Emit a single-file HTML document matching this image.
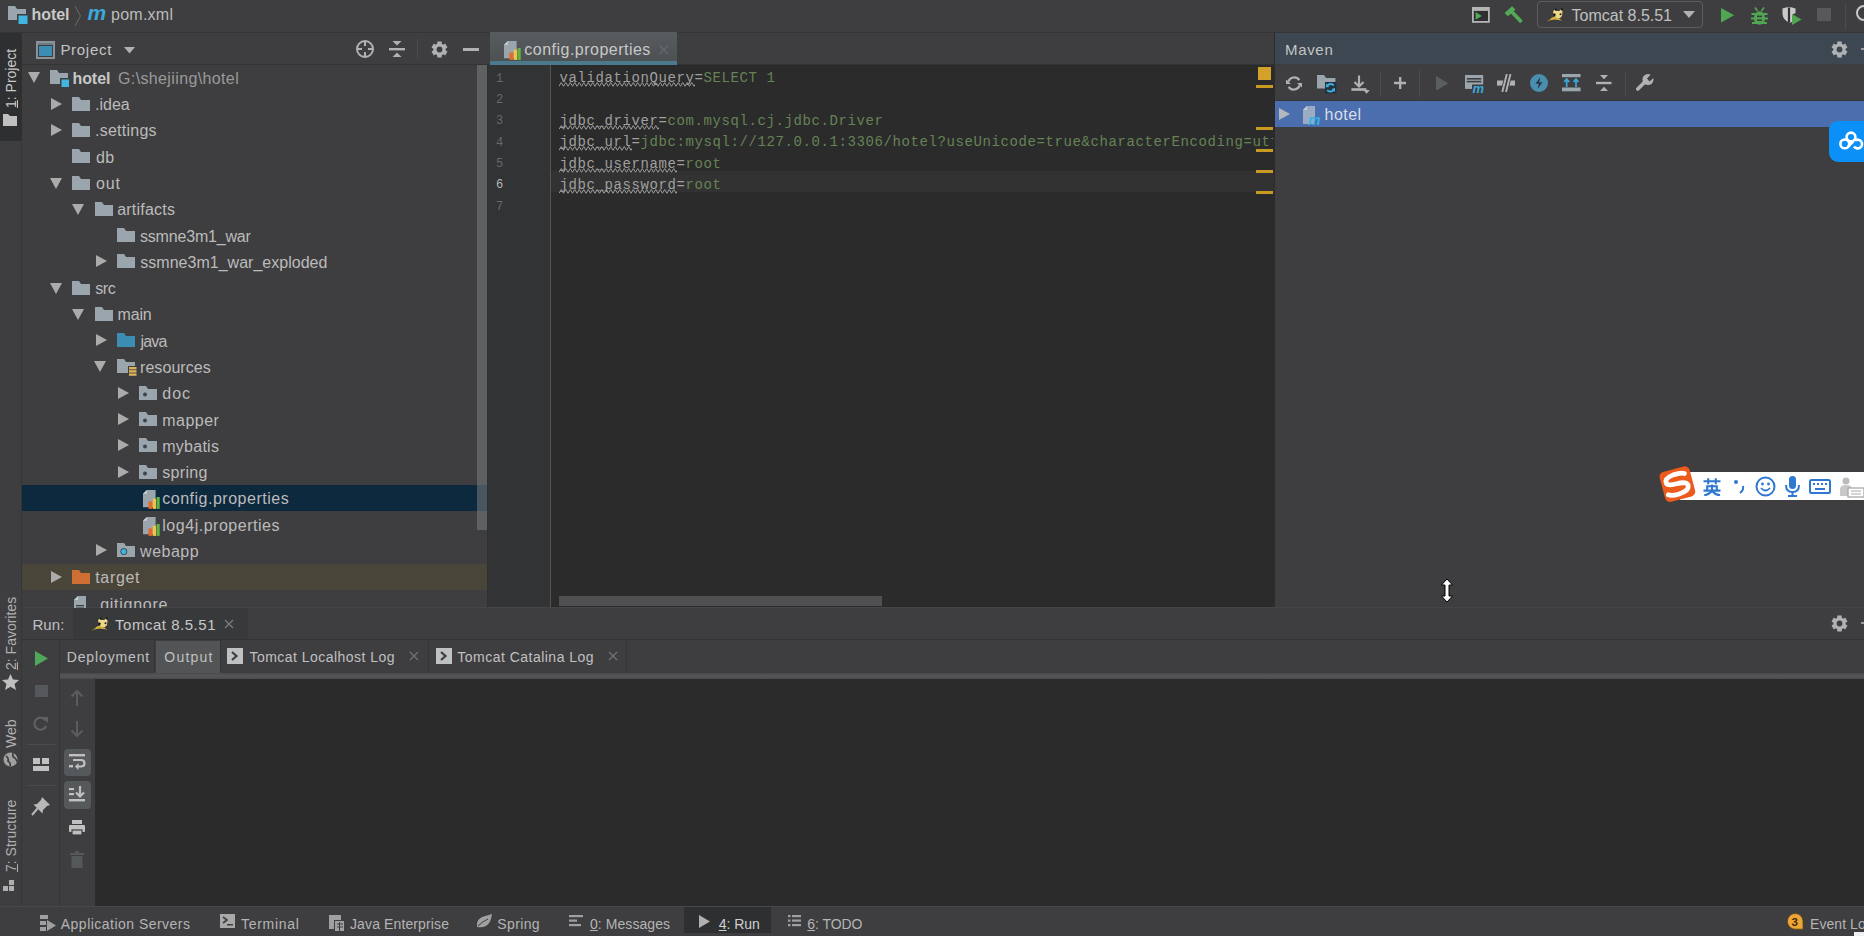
<!DOCTYPE html>
<html><head><meta charset="utf-8">
<style>
*{box-sizing:border-box;margin:0;padding:0}
html,body{width:1864px;height:936px;overflow:hidden;background:#3E3E40;font-family:"Liberation Sans",sans-serif;color:#BBBBBB;font-size:16px}
.a{position:absolute;display:block}
.t{position:absolute;white-space:nowrap;line-height:20px}
.mono{font-family:"Liberation Mono",monospace}
u{text-decoration:underline;text-underline-offset:1px}
</style></head><body>
<div class="a" style="left:0px;top:0px;width:1864px;height:33px;background:#3E3E40;"></div>
<div class="a" style="left:0px;top:32px;width:1864px;height:1px;background:#333537;"></div>
<div class="a" style="left:0px;top:33px;width:22px;height:873px;background:#3E3E40;"></div>
<div class="a" style="left:21px;top:33px;width:1px;height:873px;background:#333537;"></div>
<div class="a" style="left:0px;top:33px;width:22px;height:108px;background:#2D2F31;"></div>
<div class="a" style="left:22px;top:33px;width:466px;height:31px;background:#3E3E40;"></div>
<div class="a" style="left:22px;top:64px;width:466px;height:1px;background:#323436;"></div>
<div class="a" style="left:22px;top:65px;width:466px;height:542px;background:#3E3E40;"></div>
<div class="a" style="left:488px;top:33px;width:786px;height:31px;background:#3E3E40;"></div>
<div class="a" style="left:488px;top:64px;width:786px;height:1px;background:#323436;"></div>
<div class="a" style="left:488px;top:65px;width:786px;height:542px;background:#2B2B2B;"></div>
<div class="a" style="left:488px;top:65px;width:62px;height:542px;background:#313335;"></div>
<div class="a" style="left:550px;top:65px;width:1px;height:542px;background:#555555;"></div>
<div class="a" style="left:1274px;top:33px;width:590px;height:31px;background:#3D4752;"></div>
<div class="a" style="left:1274px;top:33px;width:1px;height:574px;background:#2B2B2B;"></div>
<div class="a" style="left:1275px;top:64px;width:589px;height:37px;background:#3E3E40;"></div>
<div class="a" style="left:1275px;top:100px;width:589px;height:1px;background:#333537;"></div>
<div class="a" style="left:1275px;top:101px;width:589px;height:26px;background:#4B6EAF;"></div>
<div class="a" style="left:22px;top:607px;width:1842px;height:1.5px;background:#444547;"></div>
<div class="a" style="left:22px;top:608px;width:1842px;height:32px;background:#3E3E40;"></div>
<div class="a" style="left:22px;top:639px;width:1842px;height:1px;background:#323436;"></div>
<div class="a" style="left:22px;top:640px;width:1842px;height:33px;background:#3E3E40;"></div>
<div class="a" style="left:95px;top:679px;width:1769px;height:227px;background:#2B2B2B;"></div>
<div class="a" style="left:0px;top:906px;width:1864px;height:30px;background:#3E3E40;"></div>
<div class="a" style="left:0px;top:906px;width:1864px;height:1px;background:#47484A;"></div>
<div class="a" style="left:22px;top:484.88px;width:465px;height:26.28px;background:#0D293E;"></div>
<div class="a" style="left:22px;top:563.72px;width:465px;height:26.28px;background:#4A4539;"></div>
<svg class="a" style="left:27.5px;top:72.4px;" width="12" height="11" viewBox="0 0 12 11"><path d="M0 0H12L6 11Z" fill="#ABABAB"/></svg>
<svg class="a" style="left:50.0px;top:70.4px;" width="20" height="18" viewBox="0 0 20 18"><path d="M0 0H7L9 3H18V14H0Z" fill="#9AA5AD"/><rect x="10" y="8" width="9" height="9" fill="#3E3E40"/><rect x="11.5" y="9.5" width="7.5" height="7.5" fill="#40B6E0"/></svg>
<svg class="a" style="left:51.3px;top:97.68px;" width="11" height="12" viewBox="0 0 11 12"><path d="M0 0L11 6L0 12Z" fill="#ABABAB"/></svg>
<svg class="a" style="left:72.3px;top:96.68px;" width="20" height="18" viewBox="0 0 20 18"><path d="M0 0H7L9 3H18V14H0Z" fill="#9AA5AD"/></svg>
<svg class="a" style="left:51.3px;top:123.96000000000001px;" width="11" height="12" viewBox="0 0 11 12"><path d="M0 0L11 6L0 12Z" fill="#ABABAB"/></svg>
<svg class="a" style="left:72.3px;top:122.96000000000001px;" width="20" height="18" viewBox="0 0 20 18"><path d="M0 0H7L9 3H18V14H0Z" fill="#9AA5AD"/></svg>
<svg class="a" style="left:72.3px;top:149.24px;" width="20" height="18" viewBox="0 0 20 18"><path d="M0 0H7L9 3H18V14H0Z" fill="#9AA5AD"/></svg>
<svg class="a" style="left:49.8px;top:177.52px;" width="12" height="11" viewBox="0 0 12 11"><path d="M0 0H12L6 11Z" fill="#ABABAB"/></svg>
<svg class="a" style="left:72.3px;top:175.52px;" width="20" height="18" viewBox="0 0 20 18"><path d="M0 0H7L9 3H18V14H0Z" fill="#9AA5AD"/></svg>
<svg class="a" style="left:72.1px;top:203.8px;" width="12" height="11" viewBox="0 0 12 11"><path d="M0 0H12L6 11Z" fill="#ABABAB"/></svg>
<svg class="a" style="left:94.6px;top:201.8px;" width="20" height="18" viewBox="0 0 20 18"><path d="M0 0H7L9 3H18V14H0Z" fill="#9AA5AD"/></svg>
<svg class="a" style="left:116.9px;top:228.08px;" width="20" height="18" viewBox="0 0 20 18"><path d="M0 0H7L9 3H18V14H0Z" fill="#9AA5AD"/></svg>
<svg class="a" style="left:95.9px;top:255.36px;" width="11" height="12" viewBox="0 0 11 12"><path d="M0 0L11 6L0 12Z" fill="#ABABAB"/></svg>
<svg class="a" style="left:116.9px;top:254.36px;" width="20" height="18" viewBox="0 0 20 18"><path d="M0 0H7L9 3H18V14H0Z" fill="#9AA5AD"/></svg>
<svg class="a" style="left:49.8px;top:282.64px;" width="12" height="11" viewBox="0 0 12 11"><path d="M0 0H12L6 11Z" fill="#ABABAB"/></svg>
<svg class="a" style="left:72.3px;top:280.64px;" width="20" height="18" viewBox="0 0 20 18"><path d="M0 0H7L9 3H18V14H0Z" fill="#9AA5AD"/></svg>
<svg class="a" style="left:72.1px;top:308.92px;" width="12" height="11" viewBox="0 0 12 11"><path d="M0 0H12L6 11Z" fill="#ABABAB"/></svg>
<svg class="a" style="left:94.6px;top:306.92px;" width="20" height="18" viewBox="0 0 20 18"><path d="M0 0H7L9 3H18V14H0Z" fill="#9AA5AD"/></svg>
<svg class="a" style="left:95.9px;top:334.20000000000005px;" width="11" height="12" viewBox="0 0 11 12"><path d="M0 0L11 6L0 12Z" fill="#ABABAB"/></svg>
<svg class="a" style="left:116.9px;top:333.20000000000005px;" width="20" height="18" viewBox="0 0 20 18"><path d="M0 0H7L9 3H18V14H0Z" fill="#3C8DB3"/></svg>
<svg class="a" style="left:94.4px;top:361.48px;" width="12" height="11" viewBox="0 0 12 11"><path d="M0 0H12L6 11Z" fill="#ABABAB"/></svg>
<svg class="a" style="left:116.9px;top:359.48px;" width="20" height="18" viewBox="0 0 20 18"><path d="M0 0H7L9 3H18V14H0Z" fill="#9AA5AD"/><rect x="11" y="7" width="9" height="11" fill="#3E3E40"/><rect x="12" y="8" width="7.5" height="2.4" fill="#D9B45A"/><rect x="12" y="11.2" width="7.5" height="2.4" fill="#D9B45A"/><rect x="12" y="14.4" width="7.5" height="2.4" fill="#D9B45A"/></svg>
<svg class="a" style="left:118.2px;top:386.76px;" width="11" height="12" viewBox="0 0 11 12"><path d="M0 0L11 6L0 12Z" fill="#ABABAB"/></svg>
<svg class="a" style="left:139.2px;top:385.76px;" width="20" height="18" viewBox="0 0 20 18"><path d="M0 0H7L9 3H18V14H0Z" fill="#9AA5AD"/><circle cx="6" cy="8.5" r="2" fill="#3A4550"/></svg>
<svg class="a" style="left:118.2px;top:413.03999999999996px;" width="11" height="12" viewBox="0 0 11 12"><path d="M0 0L11 6L0 12Z" fill="#ABABAB"/></svg>
<svg class="a" style="left:139.2px;top:412.03999999999996px;" width="20" height="18" viewBox="0 0 20 18"><path d="M0 0H7L9 3H18V14H0Z" fill="#9AA5AD"/><circle cx="6" cy="8.5" r="2" fill="#3A4550"/></svg>
<svg class="a" style="left:118.2px;top:439.32000000000005px;" width="11" height="12" viewBox="0 0 11 12"><path d="M0 0L11 6L0 12Z" fill="#ABABAB"/></svg>
<svg class="a" style="left:139.2px;top:438.32000000000005px;" width="20" height="18" viewBox="0 0 20 18"><path d="M0 0H7L9 3H18V14H0Z" fill="#9AA5AD"/><circle cx="6" cy="8.5" r="2" fill="#3A4550"/></svg>
<svg class="a" style="left:118.2px;top:465.6px;" width="11" height="12" viewBox="0 0 11 12"><path d="M0 0L11 6L0 12Z" fill="#ABABAB"/></svg>
<svg class="a" style="left:139.2px;top:464.6px;" width="20" height="18" viewBox="0 0 20 18"><path d="M0 0H7L9 3H18V14H0Z" fill="#9AA5AD"/><circle cx="6" cy="8.5" r="2" fill="#3A4550"/></svg>
<svg class="a" style="left:142.79999999999998px;top:490.28px;" width="18" height="20" viewBox="0 0 18 20"><path d="M3.8 0H12.6V17.3H0V3.8Z" fill="#9AA5AD"/><path d="M0 3.8L3.8 0V3.8Z" fill="#C9D1D6"/><rect x="4.6" y="10.8" width="9" height="8.6" fill="#3E3E40" opacity=".0"/><rect x="5.5" y="11.5" width="3.9" height="7.4" fill="#E0692B"/><rect x="9.8" y="8.7" width="3.4" height="10.2" fill="#F0C24E"/><rect x="13.6" y="7" width="3.1" height="11.9" fill="#62B543"/></svg>
<svg class="a" style="left:142.79999999999998px;top:516.56px;" width="18" height="20" viewBox="0 0 18 20"><path d="M3.8 0H12.6V17.3H0V3.8Z" fill="#9AA5AD"/><path d="M0 3.8L3.8 0V3.8Z" fill="#C9D1D6"/><rect x="4.6" y="10.8" width="9" height="8.6" fill="#3E3E40" opacity=".0"/><rect x="5.5" y="11.5" width="3.9" height="7.4" fill="#E0692B"/><rect x="9.8" y="8.7" width="3.4" height="10.2" fill="#F0C24E"/><rect x="13.6" y="7" width="3.1" height="11.9" fill="#62B543"/></svg>
<svg class="a" style="left:95.9px;top:544.44px;" width="11" height="12" viewBox="0 0 11 12"><path d="M0 0L11 6L0 12Z" fill="#ABABAB"/></svg>
<svg class="a" style="left:116.9px;top:543.44px;" width="20" height="18" viewBox="0 0 20 18"><path d="M0 0H7L9 3H18V14H0Z" fill="#9AA5AD"/><circle cx="6.8" cy="8.6" r="3.4" fill="#2F3A45"/><circle cx="6.8" cy="8.6" r="2.6" fill="#40B6E0"/></svg>
<svg class="a" style="left:51.3px;top:570.72px;" width="11" height="12" viewBox="0 0 11 12"><path d="M0 0L11 6L0 12Z" fill="#ABABAB"/></svg>
<svg class="a" style="left:72.3px;top:569.72px;" width="20" height="18" viewBox="0 0 20 18"><path d="M0 0H7L9 3H18V14H0Z" fill="#CF6E32"/></svg>
<svg class="a" style="left:74.3px;top:596.0px;" width="14" height="16" viewBox="0 0 14 16"><path d="M4 0H12V14H0V4Z" fill="#9AA5AD"/><path d="M0 4H4V0Z" fill="#C5CDD2"/><rect x="2" y="9" width="8" height="1.3" fill="#3E3E40"/><rect x="2" y="11.5" width="8" height="1.3" fill="#3E3E40"/></svg>
<div class="t" style="left:72.40px;top:68.91px;font-size:16px;color:#C8C8C8;line-height:20px;letter-spacing:-0.038px;font-weight:bold;">hotel</div>
<div class="t" style="left:118.00px;top:68.91px;font-size:16px;color:#9A9A9A;line-height:20px;letter-spacing:0.372px;">G:\shejiing\hotel</div>
<div class="t" style="left:95.00px;top:95.19px;font-size:16px;color:#BBBBBB;line-height:20px;letter-spacing:0.013px;">.idea</div>
<div class="t" style="left:95.00px;top:121.47px;font-size:16px;color:#BBBBBB;line-height:20px;letter-spacing:0.247px;">.settings</div>
<div class="t" style="left:95.90px;top:147.75px;font-size:16px;color:#BBBBBB;line-height:20px;letter-spacing:0.550px;">db</div>
<div class="t" style="left:95.90px;top:174.03px;font-size:16px;color:#BBBBBB;line-height:20px;letter-spacing:0.925px;">out</div>
<div class="t" style="left:117.20px;top:200.31px;font-size:16px;color:#BBBBBB;line-height:20px;letter-spacing:0.213px;">artifacts</div>
<div class="t" style="left:140.00px;top:226.59px;font-size:16px;color:#BBBBBB;line-height:20px;letter-spacing:-0.189px;">ssmne3m1_war</div>
<div class="t" style="left:140.30px;top:252.87px;font-size:16px;color:#BBBBBB;line-height:20px;letter-spacing:0.017px;">ssmne3m1_war_exploded</div>
<div class="t" style="left:95.20px;top:279.15px;font-size:16px;color:#BBBBBB;line-height:20px;letter-spacing:-0.337px;">src</div>
<div class="t" style="left:117.50px;top:305.43px;font-size:16px;color:#BBBBBB;line-height:20px;letter-spacing:-0.175px;">main</div>
<div class="t" style="left:140.50px;top:331.71px;font-size:16px;color:#BBBBBB;line-height:20px;letter-spacing:-0.800px;">java</div>
<div class="t" style="left:140.00px;top:357.99px;font-size:16px;color:#BBBBBB;line-height:20px;letter-spacing:0.069px;">resources</div>
<div class="t" style="left:162.30px;top:384.27px;font-size:16px;color:#BBBBBB;line-height:20px;letter-spacing:0.975px;">doc</div>
<div class="t" style="left:162.30px;top:410.55px;font-size:16px;color:#BBBBBB;line-height:20px;letter-spacing:0.470px;">mapper</div>
<div class="t" style="left:162.30px;top:436.83px;font-size:16px;color:#BBBBBB;line-height:20px;letter-spacing:0.246px;">mybatis</div>
<div class="t" style="left:162.30px;top:463.11px;font-size:16px;color:#BBBBBB;line-height:20px;letter-spacing:0.295px;">spring</div>
<div class="t" style="left:162.30px;top:489.39px;font-size:16px;color:#BBBBBB;line-height:20px;letter-spacing:0.503px;">config.properties</div>
<div class="t" style="left:162.30px;top:515.67px;font-size:16px;color:#BBBBBB;line-height:20px;letter-spacing:0.522px;">log4j.properties</div>
<div class="t" style="left:140.12px;top:541.95px;font-size:16px;color:#BBBBBB;line-height:20px;letter-spacing:0.475px;">webapp</div>
<div class="t" style="left:95.20px;top:568.23px;font-size:16px;color:#BBBBBB;line-height:20px;letter-spacing:0.685px;">target</div>
<div class="t" style="left:95.00px;top:594.51px;font-size:16px;color:#BBBBBB;line-height:20px;letter-spacing:0.736px;">.gitignore</div>
<svg class="a" style="left:8px;top:6px;" width="20" height="18" viewBox="0 0 20 18"><path d="M0 0H7L9 3H18V14H0Z" fill="#9AA5AD"/><rect x="9" y="8" width="11" height="10" fill="#3E3E40"/><rect x="10.5" y="9.5" width="9" height="8.5" fill="#40B6E0"/></svg>
<div class="t" style="left:31.60px;top:5.06px;font-size:16px;color:#C8C8C8;line-height:20px;letter-spacing:-0.088px;font-weight:bold;">hotel</div>
<svg class="a" style="left:74px;top:5px;" width="8" height="22" viewBox="0 0 8 22"><path d="M1 1L6.5 11L1 21" fill="none" stroke="#6A6A6A" stroke-width="1"/></svg>
<div class="t" style="left:87.5px;top:3px;font-size:21px;color:#BBBBBB;line-height:20px;"><i style="font-size:21px;color:#3DA8D8;font-weight:bold;letter-spacing:-1px">m</i></div>
<div class="t" style="left:111.00px;top:5.06px;font-size:16px;color:#BBBBBB;line-height:20px;letter-spacing:0.250px;">pom.xml</div>
<svg class="a" style="left:1472px;top:7px;" width="18" height="16" viewBox="0 0 18 16"><rect x="0.9" y="0.9" width="16" height="14" fill="#2F2F31" stroke="#B5B5B5" stroke-width="1.8"/><rect x="0.9" y="0.9" width="16" height="3" fill="#B5B5B5"/><path d="M3.6 5L9.8 8.9L3.6 12.8Z" fill="#54A957"/></svg>
<svg class="a" style="left:1503px;top:5px;" width="21" height="19" viewBox="0 0 21 19"><path d="M1.5 8L9 1.3L12.5 4.6L5 11.2Z" fill="#54A957"/><path d="M7.5 5.5L18.5 17" stroke="#54A957" stroke-width="3.8"/></svg>
<div class="a" style="left:1537px;top:1px;width:166px;height:27px;background:transparent;border:1px solid #5A5D60;border-radius:4px"></div>
<svg class="a" style="left:1547px;top:8px;" width="17" height="14" viewBox="0 0 17 14"><path d="M0.5 13L5 9.5L8 8.5L10.5 10L15.5 12.5L11 12L7.5 11.5L3.5 12.2Z" fill="#D6B23A"/><path d="M6 3.5L8 1L9.5 3H12.5L14 0.8L15.5 3.5L15 8L12.5 10.5L9.5 10L7 7Z" fill="#EDD88A"/><circle cx="8.6" cy="1.6" r="1.1" fill="#111"/><circle cx="14.6" cy="1.3" r="1.1" fill="#111"/><circle cx="7.5" cy="6.8" r="1.2" fill="#111"/><circle cx="13.5" cy="6.2" r="1" fill="#222"/><path d="M0 13.5L4 10.5" stroke="#6A6A3A" stroke-width="1"/></svg>
<div class="t" style="left:1571.60px;top:6.26px;font-size:16px;color:#C0C0C0;line-height:20px;letter-spacing:-0.008px;">Tomcat 8.5.51</div>
<svg class="a" style="left:1683px;top:11px;" width="12" height="8" viewBox="0 0 12 8"><path d="M0 0H12L6 7Z" fill="#AFB1B3"/></svg>
<svg class="a" style="left:1720.5px;top:7.8px;" width="14" height="15" viewBox="0 0 14 15"><path d="M0 0L13.2 7.2L0 14.5Z" fill="#50A653"/></svg>
<svg class="a" style="left:1751px;top:6.5px;" width="17" height="18" viewBox="0 0 17 18"><path d="M4 0.5L6.5 4M13 0.5L10.5 4" stroke="#50A653" stroke-width="1.6"/><ellipse cx="8.5" cy="11" rx="5.6" ry="6.8" fill="#50A653"/><path d="M0.5 7H16.5M0 11.5H17M1 16H16" stroke="#50A653" stroke-width="2"/><rect x="6" y="8.6" width="5" height="1.6" fill="#3E3E40"/><rect x="6" y="12.4" width="5" height="1.6" fill="#3E3E40"/></svg>
<svg class="a" style="left:1781.5px;top:7px;" width="20" height="18" viewBox="0 0 20 18"><path d="M0.5 1.5Q4 0 7 0Q10 0 13.5 1.5V6Q11 6.5 10 9V15Q8.5 15.5 7 15.5Q1 13 0.5 7Z" fill="#C9C9C9"/><path d="M7 0.5V15.5" stroke="#2F3133" stroke-width="2.2"/><path d="M10 7L19.5 12.5L10 18Z" fill="#50A653"/></svg>
<div class="a" style="left:1817.4px;top:8.3px;width:13.3px;height:12.7px;background:#57595B;"></div>
<div class="a" style="left:1844.5px;top:3px;width:1px;height:27px;background:#4A4D4F;"></div>
<svg class="a" style="left:1855px;top:5px;" width="9" height="18" viewBox="0 0 9 18"><circle cx="9" cy="8" r="7" fill="none" stroke="#C8C8C8" stroke-width="2"/></svg>
<div class="t" style="left:4px;top:108px;font-size:14px;color:#C8C8C8;transform:rotate(-90deg);transform-origin:0 0;line-height:14px"><u>1</u>: Project</div>
<svg class="a" style="left:3px;top:114px;" width="15" height="13" viewBox="0 0 15 13"><path d="M0 0H5L7 2H14V12H0Z" fill="#C0C0C0"/></svg>
<div class="t" style="left:4px;top:670px;font-size:14px;color:#B0B0B0;transform:rotate(-90deg);transform-origin:0 0;line-height:14px"><u>2</u>: Favorites</div>
<svg class="a" style="left:2px;top:674px;" width="17" height="16" viewBox="0 0 17 16"><path d="M8.5 0L11 5.5L17 6L12.5 10L14 16L8.5 12.8L3 16L4.5 10L0 6L6 5.5Z" fill="#C0C0C0"/></svg>
<div class="t" style="left:4px;top:748px;font-size:14px;color:#B0B0B0;transform:rotate(-90deg);transform-origin:0 0;line-height:14px">Web</div>
<svg class="a" style="left:3px;top:752px;" width="15" height="15" viewBox="0 0 15 15"><circle cx="7.5" cy="7.5" r="7" fill="#A0A0A0"/><path d="M3 4Q6 6 5 9Q8 11 7 14M10 1Q9 5 12 6Q14 8 14 10" stroke="#3E3E40" stroke-width="1.6" fill="none"/></svg>
<div class="t" style="left:4px;top:872px;font-size:14px;color:#B0B0B0;transform:rotate(-90deg);transform-origin:0 0;line-height:14px"><u>7</u>: Structure</div>
<svg class="a" style="left:3px;top:877px;" width="14" height="14" viewBox="0 0 14 14"><rect x="0" y="9" width="5" height="5" fill="#B0B0B0"/><rect x="6" y="9" width="5" height="5" fill="#B0B0B0"/><rect x="6" y="3" width="5" height="5" fill="#B0B0B0"/></svg>
<svg class="a" style="left:36px;top:41px;" width="19" height="18" viewBox="0 0 19 18"><rect x="1" y="1" width="17" height="16" fill="none" stroke="#8A9399" stroke-width="2"/><rect x="3" y="5" width="13" height="10" fill="#3C8DB3"/><rect x="2" y="2" width="15" height="2" fill="#6F7B82"/></svg>
<div class="t" style="left:60.40px;top:39.80px;font-size:15px;color:#C4C4C4;line-height:20px;letter-spacing:0.712px;">Project</div>
<svg class="a" style="left:123.5px;top:46.5px;" width="11" height="7" viewBox="0 0 11 7"><path d="M0 0H11L5.5 6.5Z" fill="#AFB1B3"/></svg>
<svg class="a" style="left:355px;top:39px;" width="20" height="20" viewBox="0 0 20 20"><circle cx="10" cy="10" r="8" fill="none" stroke="#AFB1B3" stroke-width="2"/><path d="M10 2V7M10 13V18M2 10H7M13 10H18" stroke="#AFB1B3" stroke-width="2"/></svg>
<svg class="a" style="left:388px;top:40px;" width="18" height="18" viewBox="0 0 18 18"><path d="M4.5 1H13.5L9 5.5Z" fill="#AFB1B3"/><rect x="1" y="8" width="16" height="2.4" fill="#AFB1B3"/><path d="M4.5 17H13.5L9 12.5Z" fill="#AFB1B3"/></svg>
<div class="a" style="left:417px;top:39px;width:1px;height:20px;background:#4A4D4F;"></div>
<svg class="a" style="left:430.5px;top:40.5px;" width="17" height="17" viewBox="0 0 17 17"><path d="M11.56 13.80 L10.80 14.17 L10.76 16.38 L6.24 16.38 L6.20 14.17 L5.44 13.80 L4.73 13.32 L2.80 14.40 L0.54 10.49 L2.44 9.35 L2.38 8.50 L2.44 7.65 L0.54 6.51 L2.80 2.60 L4.73 3.68 L5.44 3.20 L6.20 2.83 L6.24 0.62 L10.76 0.62 L10.80 2.83 L11.56 3.20 L12.27 3.68 L14.20 2.60 L16.46 6.51 L14.56 7.65 L14.62 8.50 L14.56 9.35 L16.46 10.49 L14.20 14.40 L12.27 13.32Z" fill="#AFB1B3"/><circle cx="8.5" cy="8.5" r="2.89" fill="#3E3E40"/></svg>
<div class="a" style="left:463px;top:48px;width:16px;height:2.5px;background:#AFB1B3;"></div>
<div class="a" style="left:476.5px;top:65px;width:11px;height:465px;background:rgba(120,123,126,0.55);"></div>
<div class="a" style="left:487px;top:65px;width:1px;height:542px;background:#2E3032;"></div>
<div class="a" style="left:490px;top:32px;width:187px;height:29px;background:linear-gradient(#585C5F,#4D5154);"></div>
<div class="a" style="left:490px;top:61px;width:187px;height:3.6px;background:#4A7A8C;"></div>
<svg class="a" style="left:504px;top:41px;" width="18" height="20" viewBox="0 0 18 20"><path d="M3.8 0H12.6V17.3H0V3.8Z" fill="#9AA5AD"/><path d="M0 3.8L3.8 0V3.8Z" fill="#C9D1D6"/><rect x="4.6" y="10.8" width="9" height="8.6" fill="#3E3E40" opacity=".0"/><rect x="5.5" y="11.5" width="3.9" height="7.4" fill="#E0692B"/><rect x="9.8" y="8.7" width="3.4" height="10.2" fill="#F0C24E"/><rect x="13.6" y="7" width="3.1" height="11.9" fill="#62B543"/></svg>
<div class="t" style="left:524.30px;top:40.26px;font-size:16px;color:#C8C8C8;line-height:20px;letter-spacing:0.484px;">config.properties</div>
<svg class="a" style="left:658.5px;top:45px;" width="9.5" height="9.5" viewBox="0 0 9.5 9.5"><path d="M0.5 0.5L9 9M9 0.5L0.5 9" stroke="#676A6D" stroke-width="1.2"/></svg>
<div class="a" style="left:551px;top:171px;width:723px;height:21px;background:#323232;"></div>
<div class="a" style="left:551px;top:65px;width:722px;height:542px;overflow:hidden">
<div class="t mono" style="left:8.5px;top:3.27px;font-size:14px;letter-spacing:0.6px;line-height:20px;color:#A0A0A0">validationQuery=<span style="color:#668356">SELECT 1</span></div>
<svg class="a" style="left:8px;top:17.40px" width="136" height="5" viewBox="0 0 136 5"><path d="M0 4.3L2.25 0.5L4.50 4.3L6.75 0.5L9.00 4.3L11.25 0.5L13.50 4.3L15.75 0.5L18.00 4.3L20.25 0.5L22.50 4.3L24.75 0.5L27.00 4.3L29.25 0.5L31.50 4.3L33.75 0.5L36.00 4.3L38.25 0.5L40.50 4.3L42.75 0.5L45.00 4.3L47.25 0.5L49.50 4.3L51.75 0.5L54.00 4.3L56.25 0.5L58.50 4.3L60.75 0.5L63.00 4.3L65.25 0.5L67.50 4.3L69.75 0.5L72.00 4.3L74.25 0.5L76.50 4.3L78.75 0.5L81.00 4.3L83.25 0.5L85.50 4.3L87.75 0.5L90.00 4.3L92.25 0.5L94.50 4.3L96.75 0.5L99.00 4.3L101.25 0.5L103.50 4.3L105.75 0.5L108.00 4.3L110.25 0.5L112.50 4.3L114.75 0.5L117.00 4.3L119.25 0.5L121.50 4.3L123.75 0.5L126.00 4.3L128.25 0.5L130.50 4.3L132.75 0.5L135.00 4.3L137.25 0.5L139.50 4.3" fill="none" stroke="#9A9A9A" stroke-width="1"/></svg>
<div class="t mono" style="left:8.5px;top:45.93px;font-size:14px;letter-spacing:0.6px;line-height:20px;color:#A0A0A0">jdbc_driver=<span style="color:#668356">com.mysql.cj.jdbc.Driver</span></div>
<svg class="a" style="left:8px;top:60.06px" width="100" height="5" viewBox="0 0 100 5"><path d="M0 4.3L2.25 0.5L4.50 4.3L6.75 0.5L9.00 4.3L11.25 0.5L13.50 4.3L15.75 0.5L18.00 4.3L20.25 0.5L22.50 4.3L24.75 0.5L27.00 4.3L29.25 0.5L31.50 4.3L33.75 0.5L36.00 4.3L38.25 0.5L40.50 4.3L42.75 0.5L45.00 4.3L47.25 0.5L49.50 4.3L51.75 0.5L54.00 4.3L56.25 0.5L58.50 4.3L60.75 0.5L63.00 4.3L65.25 0.5L67.50 4.3L69.75 0.5L72.00 4.3L74.25 0.5L76.50 4.3L78.75 0.5L81.00 4.3L83.25 0.5L85.50 4.3L87.75 0.5L90.00 4.3L92.25 0.5L94.50 4.3L96.75 0.5L99.00 4.3L101.25 0.5L103.50 4.3" fill="none" stroke="#9A9A9A" stroke-width="1"/></svg>
<div class="t mono" style="left:8.5px;top:67.26px;font-size:14px;letter-spacing:0.6px;line-height:20px;color:#A0A0A0">jdbc_url=<span style="color:#668356">jdbc:mysql://127.0.0.1:3306/hotel?useUnicode=true&amp;characterEncoding=utf8</span></div>
<svg class="a" style="left:8px;top:81.39px" width="73" height="5" viewBox="0 0 73 5"><path d="M0 4.3L2.25 0.5L4.50 4.3L6.75 0.5L9.00 4.3L11.25 0.5L13.50 4.3L15.75 0.5L18.00 4.3L20.25 0.5L22.50 4.3L24.75 0.5L27.00 4.3L29.25 0.5L31.50 4.3L33.75 0.5L36.00 4.3L38.25 0.5L40.50 4.3L42.75 0.5L45.00 4.3L47.25 0.5L49.50 4.3L51.75 0.5L54.00 4.3L56.25 0.5L58.50 4.3L60.75 0.5L63.00 4.3L65.25 0.5L67.50 4.3L69.75 0.5L72.00 4.3L74.25 0.5L76.50 4.3" fill="none" stroke="#9A9A9A" stroke-width="1"/></svg>
<div class="t mono" style="left:8.5px;top:88.59px;font-size:14px;letter-spacing:0.6px;line-height:20px;color:#A0A0A0">jdbc_username=<span style="color:#668356">root</span></div>
<svg class="a" style="left:8px;top:102.72px" width="118" height="5" viewBox="0 0 118 5"><path d="M0 4.3L2.25 0.5L4.50 4.3L6.75 0.5L9.00 4.3L11.25 0.5L13.50 4.3L15.75 0.5L18.00 4.3L20.25 0.5L22.50 4.3L24.75 0.5L27.00 4.3L29.25 0.5L31.50 4.3L33.75 0.5L36.00 4.3L38.25 0.5L40.50 4.3L42.75 0.5L45.00 4.3L47.25 0.5L49.50 4.3L51.75 0.5L54.00 4.3L56.25 0.5L58.50 4.3L60.75 0.5L63.00 4.3L65.25 0.5L67.50 4.3L69.75 0.5L72.00 4.3L74.25 0.5L76.50 4.3L78.75 0.5L81.00 4.3L83.25 0.5L85.50 4.3L87.75 0.5L90.00 4.3L92.25 0.5L94.50 4.3L96.75 0.5L99.00 4.3L101.25 0.5L103.50 4.3L105.75 0.5L108.00 4.3L110.25 0.5L112.50 4.3L114.75 0.5L117.00 4.3L119.25 0.5L121.50 4.3" fill="none" stroke="#9A9A9A" stroke-width="1"/></svg>
<div class="t mono" style="left:8.5px;top:109.92px;font-size:14px;letter-spacing:0.6px;line-height:20px;color:#A0A0A0">jdbc_password=<span style="color:#668356">root</span></div>
<svg class="a" style="left:8px;top:124.05px" width="118" height="5" viewBox="0 0 118 5"><path d="M0 4.3L2.25 0.5L4.50 4.3L6.75 0.5L9.00 4.3L11.25 0.5L13.50 4.3L15.75 0.5L18.00 4.3L20.25 0.5L22.50 4.3L24.75 0.5L27.00 4.3L29.25 0.5L31.50 4.3L33.75 0.5L36.00 4.3L38.25 0.5L40.50 4.3L42.75 0.5L45.00 4.3L47.25 0.5L49.50 4.3L51.75 0.5L54.00 4.3L56.25 0.5L58.50 4.3L60.75 0.5L63.00 4.3L65.25 0.5L67.50 4.3L69.75 0.5L72.00 4.3L74.25 0.5L76.50 4.3L78.75 0.5L81.00 4.3L83.25 0.5L85.50 4.3L87.75 0.5L90.00 4.3L92.25 0.5L94.50 4.3L96.75 0.5L99.00 4.3L101.25 0.5L103.50 4.3L105.75 0.5L108.00 4.3L110.25 0.5L112.50 4.3L114.75 0.5L117.00 4.3L119.25 0.5L121.50 4.3" fill="none" stroke="#9A9A9A" stroke-width="1"/></svg>
</div>
<div class="t mono" style="left:496px;top:68.77px;font-size:12px;line-height:20px;color:#66696C">1</div>
<div class="t mono" style="left:496px;top:90.10px;font-size:12px;line-height:20px;color:#66696C">2</div>
<div class="t mono" style="left:496px;top:111.43px;font-size:12px;line-height:20px;color:#66696C">3</div>
<div class="t mono" style="left:496px;top:132.76px;font-size:12px;line-height:20px;color:#66696C">4</div>
<div class="t mono" style="left:496px;top:154.09px;font-size:12px;line-height:20px;color:#66696C">5</div>
<div class="t mono" style="left:496px;top:175.42px;font-size:12px;line-height:20px;color:#B8B8B8">6</div>
<div class="t mono" style="left:496px;top:196.75px;font-size:12px;line-height:20px;color:#66696C">7</div>
<div class="a" style="left:1257.7px;top:66.7px;width:13.5px;height:13px;background:#D4A22A;"></div>
<div class="a" style="left:1255.7px;top:85.1px;width:17.4px;height:3px;background:#C99A22;"></div>
<div class="a" style="left:1255.7px;top:127.4px;width:17.4px;height:3px;background:#C99A22;"></div>
<div class="a" style="left:1255.7px;top:148.6px;width:17.4px;height:3px;background:#C99A22;"></div>
<div class="a" style="left:1255.7px;top:170px;width:17.4px;height:3px;background:#C99A22;"></div>
<div class="a" style="left:1255.7px;top:191.3px;width:17.4px;height:3px;background:#C99A22;"></div>
<div class="a" style="left:559px;top:596px;width:323px;height:10px;background:#505052;"></div>
<div class="t" style="left:1285.00px;top:39.90px;font-size:15px;color:#C4C4C4;line-height:20px;letter-spacing:0.675px;">Maven</div>
<svg class="a" style="left:1830.5px;top:40.5px;" width="17" height="17" viewBox="0 0 17 17"><path d="M11.56 13.80 L10.80 14.17 L10.76 16.38 L6.24 16.38 L6.20 14.17 L5.44 13.80 L4.73 13.32 L2.80 14.40 L0.54 10.49 L2.44 9.35 L2.38 8.50 L2.44 7.65 L0.54 6.51 L2.80 2.60 L4.73 3.68 L5.44 3.20 L6.20 2.83 L6.24 0.62 L10.76 0.62 L10.80 2.83 L11.56 3.20 L12.27 3.68 L14.20 2.60 L16.46 6.51 L14.56 7.65 L14.62 8.50 L14.56 9.35 L16.46 10.49 L14.20 14.40 L12.27 13.32Z" fill="#AFB1B3"/><circle cx="8.5" cy="8.5" r="2.89" fill="#3D4752"/></svg>
<svg class="a" style="left:1286px;top:75.5px;" width="16" height="15" viewBox="0 0 16 15"><path d="M13.3 4.2A6.2 6.2 0 0 0 2.3 5.6" fill="none" stroke="#AFB1B3" stroke-width="2.2"/><path d="M2.7 10.8A6.2 6.2 0 0 0 13.7 9.4" fill="none" stroke="#AFB1B3" stroke-width="2.2"/><path d="M0 3.5L5 8H0Z" fill="#AFB1B3"/><path d="M16 11.5L11 7H16Z" fill="#AFB1B3"/></svg>
<svg class="a" style="left:1316.8px;top:75.4px;" width="21" height="19" viewBox="0 0 21 19"><path d="M0 0H7L9 3H18.4V13.5H0Z" fill="#9AA5AD"/><rect x="8" y="7" width="11.5" height="11.5" fill="#21333F"/><path d="M16.8 10.5A4 4 0 0 0 10.5 10.5M10.2 15A4 4 0 0 0 16.6 15" fill="none" stroke="#3FB2E2" stroke-width="2"/><path d="M9 8.5L12.5 11.5L9 12.5Z" fill="#3FB2E2"/><path d="M18 17L14.5 14L18 13Z" fill="#3FB2E2"/></svg>
<svg class="a" style="left:1351px;top:75px;" width="20" height="19" viewBox="0 0 20 19"><path d="M8 0.5V11" stroke="#AFB1B3" stroke-width="2.2"/><path d="M3.5 7L8 11.5L12.5 7" fill="none" stroke="#AFB1B3" stroke-width="2.2"/><rect x="0.4" y="13.2" width="15" height="2.6" fill="#AFB1B3"/><path d="M12.4 15H18.8L15.6 18.8Z" fill="#AFB1B3"/></svg>
<div class="a" style="left:1379.5px;top:71.6px;width:1px;height:24px;background:#4A4D4F;"></div>
<svg class="a" style="left:1393.8px;top:76.9px;" width="12.4" height="12" viewBox="0 0 12.4 12"><path d="M6.2 0V12M0 6H12.4" stroke="#AFB1B3" stroke-width="2.3"/></svg>
<div class="a" style="left:1419px;top:70px;width:1px;height:27px;background:#4A4D4F;"></div>
<svg class="a" style="left:1436px;top:75.7px;" width="12.3" height="14.8" viewBox="0 0 12.3 14.8"><path d="M0 0L12.3 7.4L0 14.8Z" fill="#5B5E60"/></svg>
<svg class="a" style="left:1464.8px;top:75px;" width="21" height="19" viewBox="0 0 21 19"><rect x="0" y="0" width="18.2" height="13.9" fill="#9AA5AD"/><rect x="1.8" y="3" width="14.5" height="1.6" fill="#3E3E40"/><rect x="1.8" y="5.8" width="14.5" height="1.6" fill="#3E3E40"/><rect x="7" y="9.5" width="13" height="9" fill="#3E3E40"/><text x="7.6" y="18" font-family="Liberation Sans" font-style="italic" font-weight="bold" font-size="13" fill="#3AA9D9">m</text></svg>
<svg class="a" style="left:1497px;top:73.7px;" width="18" height="18" viewBox="0 0 18 18"><rect x="0" y="6.5" width="18" height="5.1" fill="#AFB1B3"/><path d="M5.3 18L9.8 0M9 18L13.5 0" stroke="#3E3E40" stroke-width="3.6"/><path d="M5.3 18L9.8 0M9 18L13.5 0" stroke="#AFB1B3" stroke-width="1.9"/></svg>
<svg class="a" style="left:1530px;top:73.7px;" width="18" height="18" viewBox="0 0 18 18"><circle cx="9" cy="9" r="9" fill="#4A8FB0"/><path d="M10.3 3L5.5 9.8H8.8L7.6 15L12.5 8.2H9.2Z" fill="#263845"/></svg>
<svg class="a" style="left:1561.6px;top:74.4px;" width="19" height="18" viewBox="0 0 19 18"><rect x="0" y="0" width="18.6" height="3.2" fill="#9AA5AD"/><rect x="0" y="13.5" width="18.6" height="3.8" fill="#9AA5AD"/><path d="M4.7 13V5.5M2.2 8L4.7 5L7.2 8M14 13V5.5M11.5 8L14 5L16.5 8" fill="none" stroke="#3AA9D9" stroke-width="1.7"/></svg>
<svg class="a" style="left:1596.3px;top:75px;" width="16" height="16" viewBox="0 0 16 16"><path d="M4 0H12L8 4.3Z" fill="#AFB1B3"/><rect x="0" y="6.8" width="15.5" height="2.4" fill="#AFB1B3"/><path d="M4 16H12L8 11.7Z" fill="#AFB1B3"/></svg>
<div class="a" style="left:1624.6px;top:71.6px;width:1px;height:24px;background:#4A4D4F;"></div>
<svg class="a" style="left:1636.2px;top:74.4px;" width="18" height="17" viewBox="0 0 18 17"><path d="M1.8 15L9.5 7.3" stroke="#AFB1B3" stroke-width="3.6" stroke-linecap="round"/><circle cx="12" cy="5.5" r="5.5" fill="#AFB1B3"/><path d="M11 4.5L15 0.2L18 0.5L18 3.5L13.5 7.5Z" fill="#3E3E40"/></svg>
<svg class="a" style="left:1279px;top:108px;" width="11" height="12" viewBox="0 0 11 12"><path d="M0 0L11 6L0 12Z" fill="#B5B8BB"/></svg>
<svg class="a" style="left:1303px;top:106px;" width="18" height="19" viewBox="0 0 18 19"><path d="M4 0H12V18H0V4Z" fill="#9AABC2"/><path d="M0 4H4V0Z" fill="#C5D0DC"/><text x="5" y="18.5" font-family="Liberation Sans" font-style="italic" font-weight="bold" font-size="14" fill="#3AB0E6">m</text></svg>
<div class="t" style="left:1324.60px;top:105.16px;font-size:16px;color:#D8DDE6;line-height:20px;letter-spacing:0.438px;">hotel</div>
<svg class="a" style="left:1829px;top:120.6px;" width="35" height="41" viewBox="0 0 35 41"><path d="M9 0H35V41H9A9 9 0 0 1 0 32V9A9 9 0 0 1 9 0Z" fill="#0B90F7"/><g fill="none" stroke="#fff" stroke-width="2.6"><circle cx="22" cy="16" r="4.4"/><circle cx="15.8" cy="22.9" r="4.4"/><path d="M25 25.5A4.4 4.4 0 1 0 26 19.5"/><path d="M19 25.8L24.5 20"/></g></svg>
<div class="a" style="left:1680px;top:472px;width:184px;height:28px;background:#FFFFFF;"></div>
<svg class="a" style="left:1657px;top:464px;" width="42" height="41" viewBox="0 0 42 41"><g transform="rotate(-15 21 20.5)"><rect x="5" y="4.5" width="31" height="31" rx="5" fill="#EC5A1C"/><path d="M30 11.5Q27 9.5 19 10Q9.5 11 10 16Q10.5 19.5 20 19.5Q31 19.5 30.5 24.5Q30 29.5 19 30Q12 30.2 9 28" fill="none" stroke="#fff" stroke-width="4.8" stroke-linecap="round"/></g></svg>
<svg class="a" style="left:1702.5px;top:478px;" width="18" height="18" viewBox="0 0 18 18"><g fill="none" stroke="#2F78D2" stroke-width="2.1"><path d="M0.5 3.3H17.5M5.2 0.3V6.3M12.8 0.3V6.3"/><path d="M4.2 12.5V8.2H13.8V12.5M9 6.5V12.3M0.5 12.6H17.5"/><path d="M9 12.6Q7 16 1.2 17.4M9.6 13.5Q12 16.5 17 17.4"/></g></svg>
<svg class="a" style="left:1733px;top:478px;" width="14" height="16" viewBox="0 0 14 16"><circle cx="3" cy="4" r="2" fill="#2F78D2"/><path d="M10 8Q11 12 7 15" stroke="#2F78D2" stroke-width="2" fill="none"/></svg>
<svg class="a" style="left:1755px;top:476px;" width="21" height="21" viewBox="0 0 21 21"><circle cx="10.5" cy="10.5" r="9" fill="none" stroke="#2F78D2" stroke-width="2"/><circle cx="7.5" cy="8" r="1.4" fill="#2F78D2"/><circle cx="13.5" cy="8" r="1.4" fill="#2F78D2"/><path d="M6 12Q10.5 17 15 12" stroke="#2F78D2" stroke-width="1.8" fill="none"/></svg>
<svg class="a" style="left:1784px;top:475px;" width="17" height="23" viewBox="0 0 17 23"><rect x="5" y="1" width="7" height="13" rx="3.5" fill="#2F78D2"/><path d="M2 10Q2 17 8.5 17Q15 17 15 10" stroke="#2F78D2" stroke-width="2" fill="none"/><path d="M8.5 17V21M4 21H13" stroke="#2F78D2" stroke-width="2"/></svg>
<svg class="a" style="left:1809px;top:479px;" width="22" height="15" viewBox="0 0 22 15"><rect x="1" y="1" width="20" height="13" rx="1.5" fill="none" stroke="#2F78D2" stroke-width="2"/><g fill="#2F78D2"><rect x="4" y="4" width="2" height="2"/><rect x="8" y="4" width="2" height="2"/><rect x="12" y="4" width="2" height="2"/><rect x="16" y="4" width="2" height="2"/><rect x="6" y="9" width="10" height="2"/></g></svg>
<svg class="a" style="left:1838px;top:476px;" width="26" height="22" viewBox="0 0 26 22"><circle cx="8" cy="5" r="3.5" fill="#BBBBBB"/><path d="M2 20V13Q2 9 8 9Q14 9 14 13V20Z" fill="#C8C8C8"/><rect x="10" y="12" width="16" height="9" fill="#fff" stroke="#AAAAAA" stroke-width="1.3"/><path d="M13 15H23M13 18H23" stroke="#AAAAAA" stroke-width="1.2"/></svg>
<svg class="a" style="left:1440px;top:578px;" width="14" height="25" viewBox="0 0 14 25"><path d="M7 1L12.5 7H9V18H12.5L7 24L1.5 18H5V7H1.5Z" fill="#fff" stroke="#000" stroke-width="1"/></svg>
<div class="t" style="left:32.40px;top:614.60px;font-size:15px;color:#C0C0C0;line-height:20px;letter-spacing:0.092px;">Run:</div>
<div class="a" style="left:73px;top:608px;width:175px;height:31px;background:#38393B;"></div>
<svg class="a" style="left:92px;top:617px;" width="17" height="14" viewBox="0 0 17 14"><path d="M0.5 13L5 9.5L8 8.5L10.5 10L15.5 12.5L11 12L7.5 11.5L3.5 12.2Z" fill="#D6B23A"/><path d="M6 3.5L8 1L9.5 3H12.5L14 0.8L15.5 3.5L15 8L12.5 10.5L9.5 10L7 7Z" fill="#EDD88A"/><circle cx="8.6" cy="1.6" r="1.1" fill="#111"/><circle cx="14.6" cy="1.3" r="1.1" fill="#111"/><circle cx="7.5" cy="6.8" r="1.2" fill="#111"/><circle cx="13.5" cy="6.2" r="1" fill="#222"/><path d="M0 13.5L4 10.5" stroke="#6A6A3A" stroke-width="1"/></svg>
<div class="t" style="left:115.00px;top:614.60px;font-size:15px;color:#C8C8C8;line-height:20px;letter-spacing:0.521px;">Tomcat 8.5.51</div>
<svg class="a" style="left:224px;top:619px;" width="10" height="10" viewBox="0 0 10 10"><path d="M1 1L9 9M9 1L1 9" stroke="#7A7D80" stroke-width="1.3"/></svg>
<svg class="a" style="left:1830.5px;top:615px;" width="17" height="17" viewBox="0 0 17 17"><path d="M11.56 13.80 L10.80 14.17 L10.76 16.38 L6.24 16.38 L6.20 14.17 L5.44 13.80 L4.73 13.32 L2.80 14.40 L0.54 10.49 L2.44 9.35 L2.38 8.50 L2.44 7.65 L0.54 6.51 L2.80 2.60 L4.73 3.68 L5.44 3.20 L6.20 2.83 L6.24 0.62 L10.76 0.62 L10.80 2.83 L11.56 3.20 L12.27 3.68 L14.20 2.60 L16.46 6.51 L14.56 7.65 L14.62 8.50 L14.56 9.35 L16.46 10.49 L14.20 14.40 L12.27 13.32Z" fill="#AFB1B3"/><circle cx="8.5" cy="8.5" r="2.89" fill="#3E3E40"/></svg>
<div class="a" style="left:59px;top:640px;width:1px;height:266px;background:#333537;"></div>
<div class="a" style="left:60px;top:640px;width:1804px;height:32px;background:#3E3E40;"></div>
<div class="a" style="left:60px;top:673px;width:1804px;height:6px;background:linear-gradient(#474749 0%,#555557 35%,#545456 60%,#4B4B4D 100%);"></div>
<div class="a" style="left:156px;top:641px;width:64px;height:32px;background:#525456;"></div>
<div class="a" style="left:154px;top:640px;width:1px;height:32px;background:#333537;"></div>
<div class="a" style="left:220px;top:640px;width:1px;height:32px;background:#333537;"></div>
<div class="a" style="left:428px;top:640px;width:1px;height:32px;background:#333537;"></div>
<div class="a" style="left:626px;top:640px;width:1px;height:32px;background:#333537;"></div>
<div class="t" style="left:66.70px;top:646.85px;font-size:14px;color:#C0C0C0;line-height:20px;letter-spacing:0.872px;">Deployment</div>
<div class="t" style="left:164.30px;top:646.85px;font-size:14px;color:#C0C0C0;line-height:20px;letter-spacing:1.220px;">Output</div>
<svg class="a" style="left:227px;top:648px;" width="16" height="16" viewBox="0 0 16 16"><rect x="0" y="0" width="16" height="16" fill="#BFC1C3"/><path d="M5 4L9.5 8L5 12" fill="none" stroke="#3E3E40" stroke-width="2.2"/></svg>
<div class="t" style="left:249.50px;top:646.85px;font-size:14px;color:#C0C0C0;line-height:20px;letter-spacing:0.466px;">Tomcat Localhost Log</div>
<svg class="a" style="left:409px;top:651px;" width="10" height="10" viewBox="0 0 10 10"><path d="M1 1L9 9M9 1L1 9" stroke="#6E7173" stroke-width="1.3"/></svg>
<svg class="a" style="left:436px;top:648px;" width="16" height="16" viewBox="0 0 16 16"><rect x="0" y="0" width="16" height="16" fill="#BFC1C3"/><path d="M5 4L9.5 8L5 12" fill="none" stroke="#3E3E40" stroke-width="2.2"/></svg>
<div class="t" style="left:457.30px;top:646.85px;font-size:14px;color:#C0C0C0;line-height:20px;letter-spacing:0.482px;">Tomcat Catalina Log</div>
<svg class="a" style="left:608px;top:651px;" width="10" height="10" viewBox="0 0 10 10"><path d="M1 1L9 9M9 1L1 9" stroke="#6E7173" stroke-width="1.3"/></svg>
<svg class="a" style="left:35px;top:651px;" width="14" height="16" viewBox="0 0 14 16"><path d="M0 0L13 7.5L0 15Z" fill="#4FA85A"/></svg>
<div class="a" style="left:34.5px;top:685px;width:13px;height:12px;background:#55585A;"></div>
<svg class="a" style="left:33px;top:716px;" width="15" height="15" viewBox="0 0 15 15"><path d="M12.5 4.5A6 6 0 1 0 13 10" fill="none" stroke="#5E6163" stroke-width="2.2"/><path d="M9 1H15V7Z" fill="#5E6163"/></svg>
<div class="a" style="left:27px;top:744px;width:28px;height:1px;background:#4A4D4F;"></div>
<svg class="a" style="left:33px;top:758px;" width="16" height="14" viewBox="0 0 16 14"><rect x="0" y="0" width="7" height="6" fill="#C0C0C0"/><rect x="9" y="0" width="7" height="6" fill="#C0C0C0"/><rect x="0" y="8" width="16" height="5" fill="#C0C0C0"/></svg>
<div class="a" style="left:27px;top:785px;width:28px;height:1px;background:#4A4D4F;"></div>
<svg class="a" style="left:31px;top:796px;" width="20" height="20" viewBox="0 0 20 20"><path d="M11 1L19 9L16 10L12 14L11.5 17.5L2.5 8.5L6 8L10 4Z" fill="#B8B8B8"/><path d="M6.5 12.5L1 19" stroke="#B8B8B8" stroke-width="2"/></svg>
<svg class="a" style="left:70px;top:689px;" width="14" height="17" viewBox="0 0 14 17"><path d="M7 2V17M1.5 7.5L7 2L12.5 7.5" fill="none" stroke="#5A5D5F" stroke-width="2"/></svg>
<svg class="a" style="left:70px;top:721px;" width="14" height="17" viewBox="0 0 14 17"><path d="M7 0V15M1.5 9.5L7 15L12.5 9.5" fill="none" stroke="#5A5D5F" stroke-width="2"/></svg>
<div class="a" style="left:63.5px;top:748.5px;width:27.5px;height:27.5px;background:#56595B;border-radius:4px"></div>
<svg class="a" style="left:68px;top:753px;" width="19" height="18" viewBox="0 0 19 18"><rect x="1" y="1" width="16" height="2.4" fill="#C0C0C0"/><rect x="1" y="12" width="4" height="2.4" fill="#C0C0C0"/><path d="M5 7H13Q16.5 7 16.5 10.3Q16.5 13.5 13 13.5H9" fill="none" stroke="#C0C0C0" stroke-width="2.2"/><path d="M10.5 10L7 13.5L10.5 17Z" fill="#C0C0C0"/></svg>
<div class="a" style="left:63.5px;top:781px;width:27.5px;height:27.5px;background:#56595B;border-radius:4px"></div>
<svg class="a" style="left:68px;top:785px;" width="19" height="19" viewBox="0 0 19 19"><rect x="1" y="3" width="5" height="2.2" fill="#C0C0C0"/><rect x="1" y="8" width="5" height="2.2" fill="#C0C0C0"/><rect x="1" y="14" width="16" height="2.4" fill="#C0C0C0"/><path d="M12 1V11M8 7.5L12 11.5L16 7.5" fill="none" stroke="#C0C0C0" stroke-width="2.2"/></svg>
<svg class="a" style="left:69px;top:820px;" width="16" height="16" viewBox="0 0 16 16"><rect x="3" y="0" width="10" height="4" fill="#C0C0C0"/><rect x="0" y="5" width="16" height="7" rx="1" fill="#C0C0C0"/><rect x="3" y="10" width="10" height="5" fill="#C0C0C0" stroke="#3E3E40" stroke-width="1.2"/></svg>
<svg class="a" style="left:70px;top:851px;" width="14" height="17" viewBox="0 0 14 17"><rect x="0" y="2" width="14" height="2" fill="#55585A"/><rect x="5" y="0" width="4" height="2" fill="#55585A"/><path d="M1.5 5H12.5V17H1.5Z" fill="#55585A"/></svg>
<div class="a" style="left:1861px;top:622px;width:3px;height:2px;background:#9A9A9A;"></div>
<div class="a" style="left:1861px;top:48px;width:3px;height:2px;background:#9A9A9A;"></div>
<div class="a" style="left:684.4px;top:907.3px;width:87px;height:26.2px;background:#2E2F31;"></div>
<svg class="a" style="left:40px;top:915px;" width="16" height="16" viewBox="0 0 16 16"><rect x="0" y="0" width="8" height="4" fill="#A0A0A0"/><rect x="0" y="6" width="6" height="4" fill="#A0A0A0"/><rect x="0" y="12" width="6" height="4" fill="#A0A0A0"/><path d="M7 5L16 10.5L7 16Z" fill="#A0A0A0"/></svg>
<div class="t" style="left:60.80px;top:913.75px;font-size:14px;color:#B4B4B4;line-height:20px;letter-spacing:0.476px;">Application Servers</div>
<svg class="a" style="left:220px;top:914px;" width="15" height="15" viewBox="0 0 15 15"><rect x="0" y="0" width="15" height="14" fill="#A9A9A9"/><path d="M3 3L7 6L3 9" fill="none" stroke="#3E3E40" stroke-width="1.6"/><rect x="7" y="10" width="6" height="1.5" fill="#3E3E40"/></svg>
<div class="t" style="left:241.00px;top:913.75px;font-size:14px;color:#B4B4B4;line-height:20px;letter-spacing:0.718px;">Terminal</div>
<svg class="a" style="left:329px;top:915px;" width="15" height="16" viewBox="0 0 15 16"><rect x="0" y="0" width="12" height="14" fill="#A0A0A0"/><rect x="5" y="5" width="10" height="11" fill="#3E3E40"/><rect x="6" y="6" width="9" height="10" fill="#A0A0A0"/><path d="M8 9H14M8 12H14M10.5 7V16" stroke="#3E3E40" stroke-width="1"/></svg>
<div class="t" style="left:350.00px;top:913.75px;font-size:14px;color:#B4B4B4;line-height:20px;letter-spacing:0.118px;">Java Enterprise</div>
<svg class="a" style="left:476px;top:914px;" width="16" height="14" viewBox="0 0 16 14"><path d="M1 13Q0 4 9 2Q13 1 16 0Q15 9 10 12Q6 14 1 13Z" fill="#A0A0A0"/><path d="M2 12Q7 7 12 5" stroke="#3E3E40" stroke-width="1" fill="none"/></svg>
<div class="t" style="left:497.30px;top:913.75px;font-size:14px;color:#B4B4B4;line-height:20px;letter-spacing:0.360px;">Spring</div>
<svg class="a" style="left:569px;top:915px;" width="14" height="12" viewBox="0 0 14 12"><rect x="0" y="0" width="14" height="2.2" fill="#A0A0A0"/><rect x="0" y="4.5" width="8" height="2.2" fill="#A0A0A0"/><rect x="0" y="9" width="12" height="2.2" fill="#A0A0A0"/></svg>
<div class="t" style="left:590.00px;top:913.75px;font-size:14px;color:#B4B4B4;line-height:20px;letter-spacing:0.062px;"><u>0</u>: Messages</div>
<svg class="a" style="left:699px;top:915px;" width="11" height="13" viewBox="0 0 11 13"><path d="M0 0L11 6.5L0 13Z" fill="#B0B0B0"/></svg>
<div class="t" style="left:718.80px;top:913.75px;font-size:14px;color:#D0D0D0;line-height:20px;letter-spacing:-0.050px;"><u>4</u>: Run</div>
<svg class="a" style="left:788px;top:915px;" width="13" height="12" viewBox="0 0 13 12"><g fill="#A0A0A0"><rect x="0" y="0" width="2.5" height="2.2"/><rect x="4" y="0" width="9" height="2.2"/><rect x="0" y="4.5" width="2.5" height="2.2"/><rect x="4" y="4.5" width="9" height="2.2"/><rect x="0" y="9" width="2.5" height="2.2"/><rect x="4" y="9" width="9" height="2.2"/></g></svg>
<div class="t" style="left:807.30px;top:913.75px;font-size:14px;color:#B4B4B4;line-height:20px;letter-spacing:-0.050px;"><u>6</u>: TODO</div>
<svg class="a" style="left:1786.8px;top:913.4px;" width="17" height="17" viewBox="0 0 17 17"><path d="M8.2 0.5A7.8 7.8 0 1 0 8.2 16.2H16V8.2A7.8 7.8 0 0 0 8.2 0.5Z" fill="#EFA534" stroke="#5A4420" stroke-width="0.8"/><text x="4.6" y="12.6" font-family="Liberation Sans" font-weight="bold" font-size="11.5" fill="#3A2A10">3</text></svg>
<div class="t" style="left:1810.00px;top:914.05px;font-size:14px;color:#B4B4B4;line-height:20px;letter-spacing:0.062px;">Event Log</div>
<div class="a" style="left:1854px;top:932px;width:10px;height:4px;background:#F0F0F0;"></div>
</body></html>
